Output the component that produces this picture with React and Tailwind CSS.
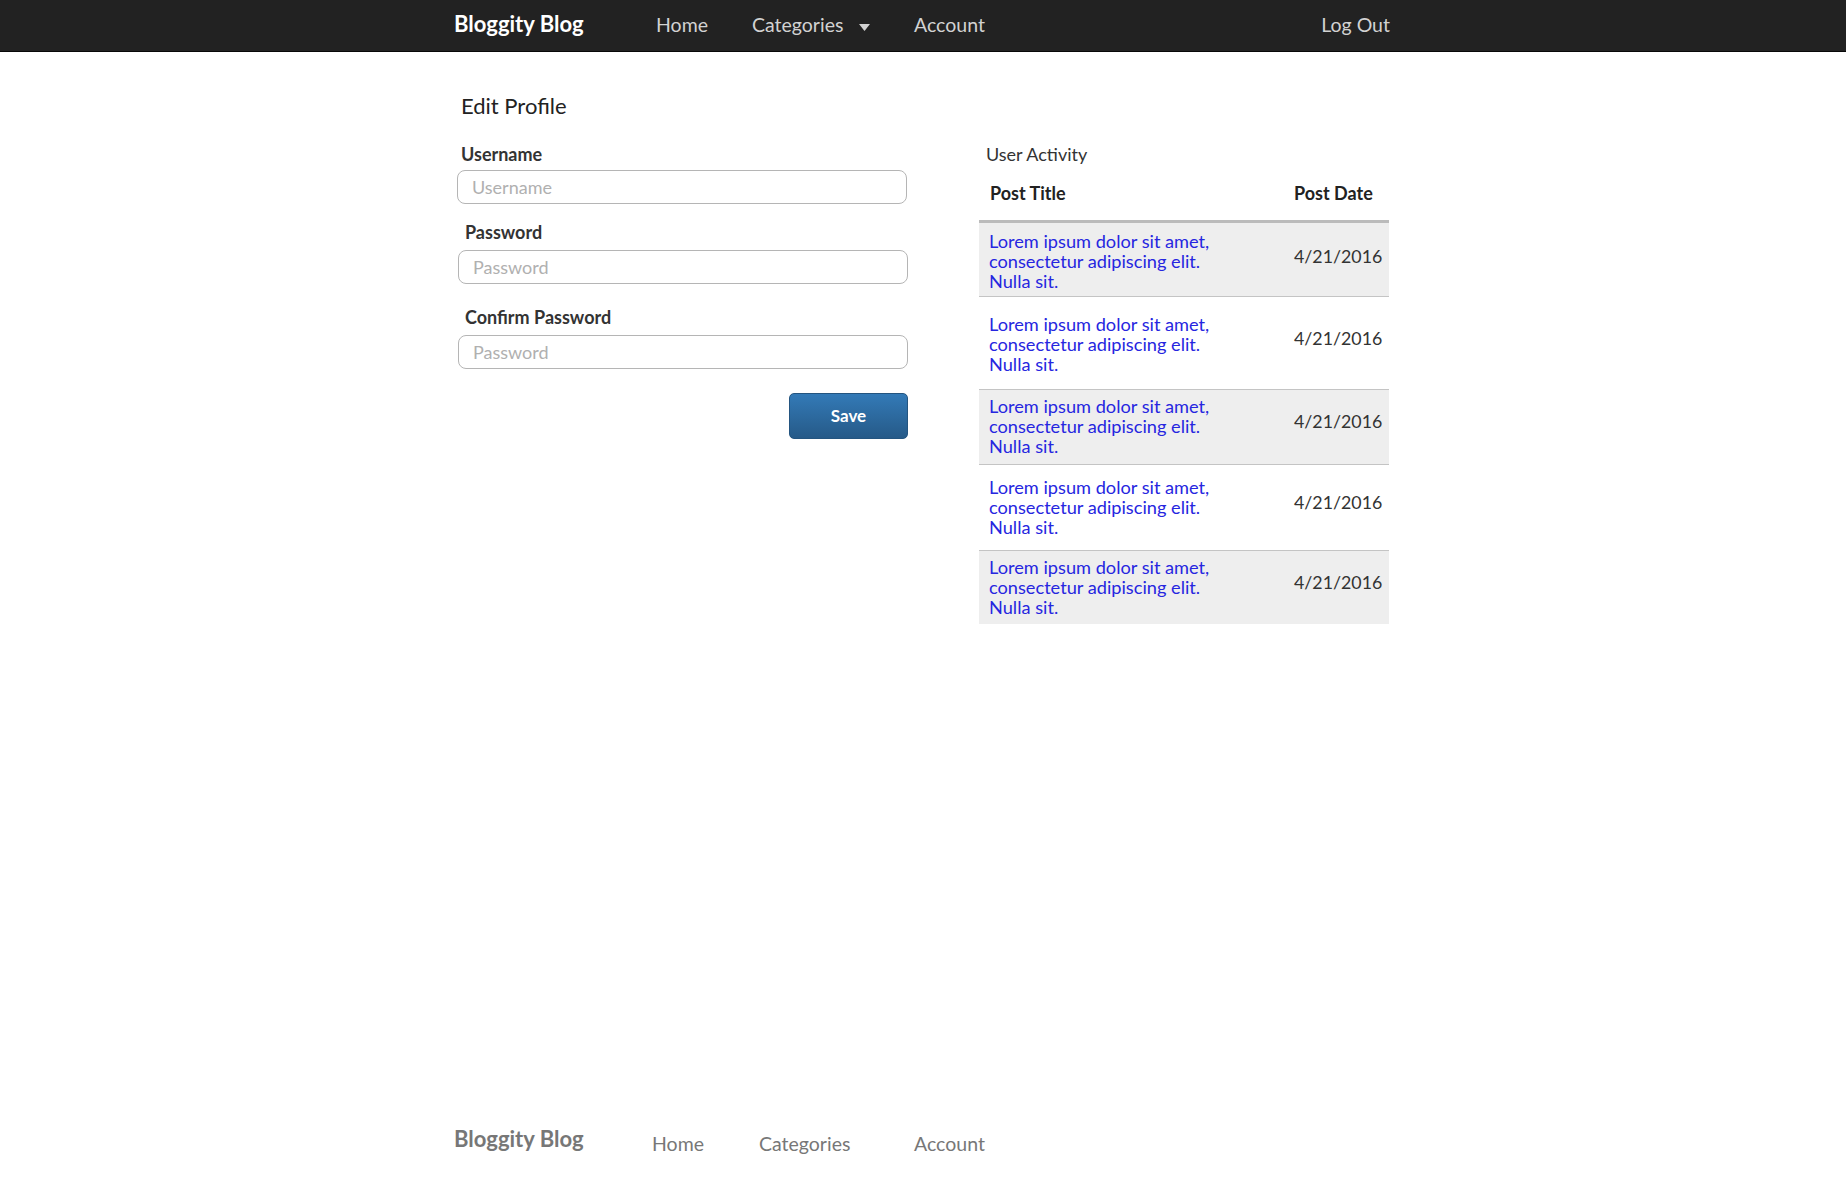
const rows = [
  { h: 'h-[73px]', pt: 'pt-[8px]', mb: 'mb-[8px]', bg: 'bg-[#eeeeee]', border: true },
  { h: 'h-[92px]', pt: 'pt-[17px]', mb: 'mb-[11px]', bg: 'bg-white', border: true },
  { h: 'h-[74px]', pt: 'pt-[6px]', mb: 'mb-[12px]', bg: 'bg-[#eeeeee]', border: true },
  { h: 'h-[85px]', pt: 'pt-[12px]', mb: 'mb-[11px]', bg: 'bg-white', border: true },
  { h: 'h-[73px]', pt: 'pt-[6px]', mb: 'mb-[11px]', bg: 'bg-[#eeeeee]', border: false },
]

const Field = ({ label, placeholder, labelClass, inputClass, type }) => (
  <>
    <label className={`block font-bold text-[18px] leading-[22px] text-[#333] ${labelClass}`}>{label}</label>
    <input
      type={type}
      placeholder={placeholder}
      className={`block h-[34px] w-[450px] rounded-[8px] border border-[#b5b5b5] bg-white px-[14px] text-[18px] text-[#333] placeholder:text-[#b0b0b0] outline-none ${inputClass}`}
    />
  </>
)

const App = () => {
  return (
    <div className="min-h-screen flex flex-col bg-white" style={{ fontFamily: 'Lato, "Open Sans", sans-serif' }}>
      <header className="h-[52px] bg-[#222222] border-b border-[#080808]">
        <div className="w-[940px] mx-auto h-[51px] flex items-baseline pt-[12px] pl-[1px] pr-[3px]">
          <span className="w-[202px] text-[22px] leading-[24px] font-bold text-white">Bloggity Blog</span>
          <a className="w-[96px] text-[19.5px] leading-[24px] text-[#d2d2d2]">Home</a>
          <a className="w-[107px] text-[19.5px] leading-[24px] text-[#d2d2d2]">Categories</a>
          <span className="w-[55px]">
            <svg width="11" height="7" viewBox="0 0 11 7" className="inline-block">
              <path d="M0 0 L11 0 L5.5 7 Z" fill="#d2d2d2" />
            </svg>
          </span>
          <a className="text-[19.5px] leading-[24px] text-[#d2d2d2]">Account</a>
          <a className="ml-auto text-[19.5px] leading-[24px] text-[#d2d2d2]">Log Out</a>
        </div>
      </header>

      <main className="flex-1">
        <div className="w-[940px] mx-auto flex items-start">
          <section className="w-[455px] pl-[4px] pt-[40px] flex flex-col">
            <h1 className="ml-[4px] text-[22px] leading-[28px] text-[#222]">Edit Profile</h1>
            <div className="mt-[23px]">
              <Field label="Username" placeholder="Username" type="text" labelClass="ml-[4px]" inputClass="mt-[5px]" />
            </div>
            <div className="mt-[17px]">
              <Field label="Password" placeholder="Password" type="password" labelClass="ml-[8px]" inputClass="mt-[7px] ml-[1px]" />
            </div>
            <div className="mt-[22px]">
              <Field label="Confirm Password" placeholder="Password" type="password" labelClass="ml-[8px]" inputClass="mt-[7px] ml-[1px]" />
            </div>
            <button className="mt-[24px] ml-[332px] h-[46px] w-[119px] rounded-[5px] border border-[#245580] bg-gradient-to-b from-[#337ab7] to-[#265a88] text-[17px] font-bold text-white">
              Save
            </button>
          </section>

          <section className="ml-[71px] w-[410px] pt-[91px]">
            <p className="ml-[7px] text-[18px] leading-[22px] text-[#333]">User Activity</p>
            <div className="flex pt-[17px] pb-[16px] border-b-[3px] border-[#bbbbbb] text-[18px] leading-[22px] font-bold text-[#222]">
              <div className="w-[315px] pl-[11px]">Post Title</div>
              <div>Post Date</div>
            </div>
            {rows.map((r, i) => (
              <div key={i} className={`flex ${r.h} ${r.bg} ${r.border ? 'border-b border-[#c4c4c4]' : ''} box-content`}>
                <a className={`w-[315px] pl-[10px] self-start ${r.pt} text-[18.2px] leading-[20px] text-[#2626e0]`}>
                  Lorem ipsum dolor sit amet,
                  <br />
                  consectetur adipiscing elit.
                  <br />
                  Nulla sit.
                </a>
                <div className={`self-center ${r.mb} text-[17.8px] leading-[20px] text-[#333]`}>4/21/2016</div>
              </div>
            ))}
          </section>
        </div>
      </main>

      <footer className="h-[80px]">
        <div className="w-[940px] mx-auto flex items-start pl-[1px]">
          <span className="w-[198px] pt-[19px] text-[22px] leading-[24px] font-bold text-[#777]">Bloggity Blog</span>
          <a className="w-[107px] pt-[24px] text-[19.5px] leading-[24px] text-[#777]">Home</a>
          <a className="w-[155px] pt-[24px] text-[19.5px] leading-[24px] text-[#777]">Categories</a>
          <a className="pt-[24px] text-[19.5px] leading-[24px] text-[#777]">Account</a>
        </div>
      </footer>
    </div>
  )
}

export default App
